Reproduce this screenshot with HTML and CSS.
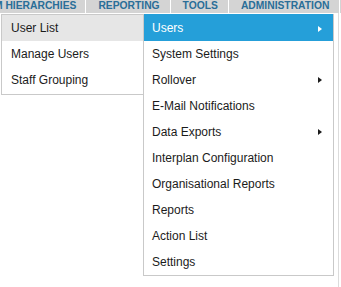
FILE: index.html
```html
<!DOCTYPE html>
<html>
<head>
<meta charset="utf-8">
<link rel="stylesheet" href="styles.css">
</head>
<body>
<div class="topbar">
  <div class="tab tab-first">M HIERARCHIES</div>
  <div class="tab">REPORTING</div>
  <div class="tab">TOOLS</div>
  <div class="tab">ADMINISTRATION</div>
</div>
<div class="page"></div>

<ul class="menu menu-left">
  <li class="item hover-grey">User List</li>
  <li class="item">Manage Users</li>
  <li class="item">Staff Grouping</li>
</ul>

<ul class="menu menu-right">
  <li class="item active">Users<span class="arrow"></span></li>
  <li class="item">System Settings</li>
  <li class="item">Rollover<span class="arrow"></span></li>
  <li class="item">E-Mail Notifications</li>
  <li class="item">Data Exports<span class="arrow"></span></li>
  <li class="item">Interplan Configuration</li>
  <li class="item">Organisational Reports</li>
  <li class="item">Reports</li>
  <li class="item">Action List</li>
  <li class="item">Settings</li>
</ul>
</body>
</html>
```
FILE: styles.css
```css
html, body {
  margin: 0;
  padding: 0;
  background: #ffffff;
  font-family: "Liberation Sans", Arial, sans-serif;
  overflow: hidden;
}
body {
  width: 341px;
  height: 287px;
  position: relative;
}
.topbar {
  display: flex;
  height: 13px;
  background: #d4d4d4;
  margin-left: -6px;
  white-space: nowrap;
}
.tab {
  font-size: 10.3px;
  font-weight: bold;
  color: #2a6e98;
  line-height: 12px;
  height: 13px;
  padding: 0 10px 0 12px;
  border-right: 1px solid #ffffff;
}
.tab-first {
  padding-left: 0;
  padding-right: 9px;
}
.page {
  width: 338px;
  height: 274px;
  border-right: 1px solid #dcdcdc;
}
.menu {
  position: absolute;
  list-style: none;
  margin: 0;
  padding: 0;
  background: #ffffff;
  border: 1px solid #c9c9c9;
}
.menu-left {
  left: 1px;
  top: 14px;
  width: 142px;
}
.menu-right {
  left: 143px;
  top: 14px;
  width: 189px;
  z-index: 2;
}
.item {
  position: relative;
  height: 26px;
  line-height: 26px;
  font-size: 12px;
  color: #1b1b1b;
}
.menu-left .item {
  padding-left: 9px;
}
.menu-left .item:last-child {
  height: 27px;
}
.menu-right .item {
  padding-left: 8px;
}
.menu-right .item:first-child {
  margin-top: -1px;
  height: 27px;
  line-height: 28px;
}
.hover-grey {
  background: #e6e6e6;
}
.active {
  background: #259fd9;
  color: #ffffff;
}
.arrow {
  position: absolute;
  right: 11px;
  top: 50%;
  margin-top: -3px;
  width: 0;
  height: 0;
  border-left: 4px solid #1b1b1b;
  border-top: 3px solid transparent;
  border-bottom: 3px solid transparent;
}
.active .arrow {
  border-left-color: #ffffff;
  margin-top: -2px;
}
```
